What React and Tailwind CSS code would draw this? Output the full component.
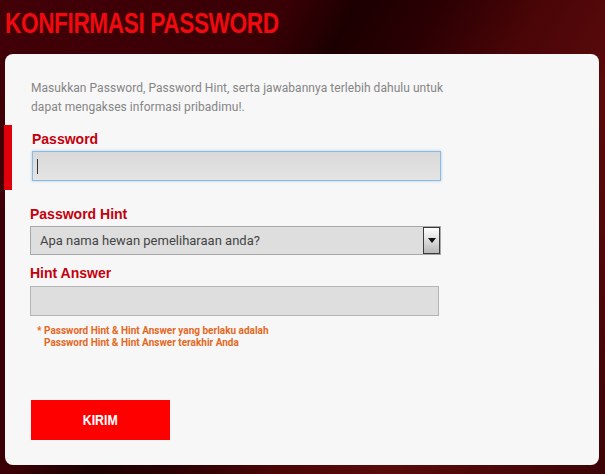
import React from "react";

export default function App() {
  return (
    <div className="relative w-[605px] h-[474px] overflow-hidden bg-[linear-gradient(120deg,#420007_0%,#380005_33%,#1c0001_41%,#2a0003_50%,#4a0507_62%,#5a0a0b_75%,#3c0406_100%)]">
      <div className="px-[5px] pt-[9px] h-[45px]">
        <h1 className="inline-block origin-left scale-x-[0.78] whitespace-nowrap text-[29px] leading-[29px] font-bold tracking-[-0.5px] text-[#f00a0f] [font-family:'Liberation_Sans',Arial,sans-serif]">
          KONFIRMASI PASSWORD
        </h1>
      </div>
      <div className="relative mx-[5px] mt-[9px] h-[411px] w-[594px] rounded-lg bg-[#f7f7f7] pt-[25px] pl-[26px]">
        <p className="text-[12px] leading-[19px] tracking-[0.05px] text-[#858585] [font-family:Roboto,'Liberation_Sans',sans-serif]">
          Masukkan Password, Password Hint, serta jawabannya terlebih dahulu untuk
          <br />
          dapat mengakses informasi pribadimu!.
        </p>

        <div className="absolute left-[-1px] top-[71px] h-[65px] w-[8px] bg-[#e0000b]" />

        <div className="mt-[13px] pl-[1px]">
          <div className="text-[14px] leading-[18px] font-bold text-[#c4000c] [font-family:'Liberation_Sans',Arial,sans-serif]">
            Password
          </div>
          <div className="mt-[3px] flex h-[30px] w-[409px] items-center border border-[#8fb8db] bg-[linear-gradient(#d9d9d9,#e4e4e4)] pl-[4px] shadow-[0_0_3px_#a9cdec]">
            <div className="h-[15px] w-px bg-[#333]" />
          </div>
        </div>

        <div className="mt-[24px] -ml-[1px]">
          <div className="text-[14px] leading-[18px] font-bold text-[#c4000c] [font-family:'Liberation_Sans',Arial,sans-serif]">
            Password Hint
          </div>
          <div className="mt-[3px] flex h-[29px] w-[411px] items-stretch border border-[#a8a8a8] bg-[#dedede]">
            <div className="flex flex-1 items-center pl-[9px] text-[13px] text-[#444] [font-family:Roboto,'Liberation_Sans',sans-serif]">
              Apa nama hewan pemeliharaan anda?
            </div>
            <div className="flex w-[17px] items-center justify-center border border-[#3a3a3a] bg-[linear-gradient(#ffffff,#b8b8b8)]">
              <svg width="8" height="5" viewBox="0 0 8 5">
                <path d="M0 0H8L4 5Z" fill="#111" />
              </svg>
            </div>
          </div>
        </div>

        <div className="mt-[9px] -ml-[1px]">
          <div className="text-[14px] leading-[18px] font-bold text-[#c4000c] [font-family:'Liberation_Sans',Arial,sans-serif]">
            Hint Answer
          </div>
          <div className="mt-[4px] h-[30px] w-[409px] border border-[#b5b5b5] bg-[#dedede]" />
        </div>

        <div className="mt-[9px] pl-[6px] text-[10px] leading-[12px] font-bold text-[#e4681e] [font-family:Roboto,'Liberation_Sans',sans-serif]">
          <div>* Password Hint &amp; Hint Answer yang berlaku adalah</div>
          <div className="pl-[7px]">Password Hint &amp; Hint Answer terakhir Anda</div>
        </div>

        <button className="mt-[51px] flex h-[40px] w-[139px] items-center justify-center bg-[#ff0000] text-white">
          <span className="inline-block scale-x-[0.82] text-[15px] font-bold [font-family:'Liberation_Sans',Arial,sans-serif]">
            KIRIM
          </span>
        </button>
      </div>
    </div>
  );
}
